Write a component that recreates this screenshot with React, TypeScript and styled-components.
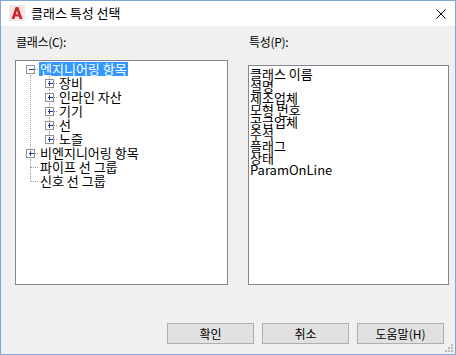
import styled, { createGlobalStyle } from 'styled-components';

const GlobalStyle = createGlobalStyle`
  html, body {
    margin: 0;
    padding: 0;
    background: #ffffff;
  }
  body {
    font-family: "Noto Sans CJK KR", "Liberation Sans", sans-serif;
    font-size: 12px;
    color: #000000;
  }
`;

const Window = styled.div`
  position: relative;
  box-sizing: border-box;
  width: 456px;
  height: 355px;
  border: 1px solid #7ea6d9;
  background: #f0f0f0;
  display: flex;
  flex-direction: column;
`;

const TitleBar = styled.div`
  height: 25px;
  background: #ffffff;
  display: flex;
  align-items: center;
  padding: 0 9px 0 8px;
  gap: 6px;
`;

const TitleText = styled.div`
  flex: 1;
  font-size: 13px;
  line-height: 16px;
  margin-top: -1px;
`;

const Body = styled.div`
  display: grid;
  grid-template-columns: 213px 201px;
  column-gap: 20px;
  padding: 9px 6px 0 14px;
`;

const Column = styled.div`
  display: flex;
  flex-direction: column;
`;

const Label = styled.div`
  line-height: 14px;
  height: 14px;
  margin-bottom: 11px;
  padding-left: 1px;
  letter-spacing: -0.3px;
`;

const ListBox = styled.div<{ $height: number; $offset?: number }>`
  box-sizing: border-box;
  height: ${(p) => p.$height}px;
  margin-top: ${(p) => p.$offset || 0}px;
  background: #ffffff;
  border: 1px solid #82878f;
  overflow: hidden;
`;

const TreeList = styled.div`
  padding-top: 1px;
  display: flex;
  flex-direction: column;
`;

const TreeRow = styled.div`
  display: flex;
  align-items: center;
  height: 14px;
`;

const TreeLabel = styled.span<{ $selected?: boolean }>`
  font-size: 13px;
  line-height: 14px;
  height: 14px;
  padding: 0 1px;
  white-space: nowrap;
  background: ${(p) => (p.$selected ? '#3399ff' : 'transparent')};
  color: ${(p) => (p.$selected ? '#ffffff' : '#000000')};
`;

const PropList = styled.div`
  padding: 2px 0 0 1px;
  display: flex;
  flex-direction: column;
`;

const PropItem = styled.div`
  font-size: 13px;
  line-height: 12px;
  height: 12px;
  white-space: nowrap;
`;

const Footer = styled.div`
  display: flex;
  justify-content: flex-end;
  gap: 8px;
  margin-top: 38px;
  padding-right: 11px;
`;

const Button = styled.button`
  box-sizing: border-box;
  width: 87px;
  height: 21px;
  padding: 0;
  background: #e1e1e1;
  border: 1px solid #adadad;
  font-family: inherit;
  font-size: 12px;
  color: #000000;
`;

const Grip = styled.svg`
  position: absolute;
  right: 1px;
  bottom: 1px;
`;

type Node = {
  label: string;
  level: number;
  toggle?: '+' | '-';
  selected?: boolean;
  first?: boolean;
  last?: boolean;
  guides: boolean[];
};

const tree: Node[] = [
  { label: '엔지니어링 항목', level: 0, toggle: '-', selected: true, first: true, guides: [] },
  { label: '장비', level: 1, toggle: '+', guides: [true] },
  { label: '인라인 자산', level: 1, toggle: '+', guides: [true] },
  { label: '기기', level: 1, toggle: '+', guides: [true] },
  { label: '선', level: 1, toggle: '+', guides: [true] },
  { label: '노즐', level: 1, toggle: '+', last: true, guides: [true] },
  { label: '비엔지니어링 항목', level: 0, toggle: '+', guides: [] },
  { label: '파이프 선 그룹', level: 0, guides: [] },
  { label: '신호 선 그룹', level: 0, last: true, guides: [] },
];

const properties = [
  '클래스 이름',
  '설명',
  '제조업체',
  '모형 번호',
  '공급업체',
  '주석',
  '플래그',
  '상태',
  'ParamOnLine',
];

const cx = (level: number) => 14 + 19 * level;

const Connector = ({ node }: { node: Node }) => {
  const c = cx(node.level);
  const width = c + 9;
  const x = c + 0.5;
  const line = { stroke: '#a0a0a0', strokeDasharray: '1 1', shapeRendering: 'crispEdges' as const };
  return (
    <svg width={width} height={14} style={{ flex: 'none' }}>
      {node.guides.map((g, a) =>
        g ? <line key={a} x1={cx(a) + 0.5} y1={0} x2={cx(a) + 0.5} y2={14} {...line} /> : null
      )}
      {!(node.level === 0 && node.first) && <line x1={x} y1={0} x2={x} y2={7} {...line} />}
      {!node.last && <line x1={x} y1={7} x2={x} y2={14} {...line} />}
      <line x1={node.toggle ? c + 5 : c + 1} y1={7.5} x2={width} y2={7.5} {...line} />
      {node.toggle && (
        <g shapeRendering="crispEdges">
          <rect x={c - 3.5} y={3.5} width={8} height={8} fill="#ffffff" stroke="#919191" />
          <line x1={c - 1} y1={7.5} x2={c + 4} y2={7.5} stroke="#1f3f8f" />
          {node.toggle === '+' && <line x1={x} y1={5} x2={x} y2={10} stroke="#1f3f8f" />}
        </g>
      )}
    </svg>
  );
};

const AppIcon = () => (
  <svg width={16} height={16} viewBox="0 0 16 16" style={{ flex: 'none', marginTop: -2 }}>
    <rect x={0} y={0} width={16} height={16} fill="#f4e4e4" />
    <path
      d="M2.5 14 L6.6 2 L9.4 2 L13.5 14 L10.6 14 L9.8 11.4 L6.2 11.4 L5.4 14 Z M6.9 9.2 L9.1 9.2 L8 5.6 Z"
      fill="#c9252c"
      fillRule="evenodd"
    />
  </svg>
);

const CloseIcon = () => (
  <svg width={10} height={10} viewBox="0 0 10 10" style={{ flex: 'none', marginTop: 1 }}>
    <path d="M0.5 0.5 L9.5 9.5 M9.5 0.5 L0.5 9.5" stroke="#000000" strokeWidth={1} />
  </svg>
);

export default function App() {
  return (
    <>
      <GlobalStyle />
      <Window>
        <TitleBar>
          <AppIcon />
          <TitleText>클래스 특성 선택</TitleText>
          <CloseIcon />
        </TitleBar>
        <Body>
          <Column>
            <Label>클래스(C):</Label>
            <ListBox $height={225}>
              <TreeList>
                {tree.map((node) => (
                  <TreeRow key={node.label}>
                    <Connector node={node} />
                    <TreeLabel $selected={node.selected}>{node.label}</TreeLabel>
                  </TreeRow>
                ))}
              </TreeList>
            </ListBox>
          </Column>
          <Column>
            <Label>특성(P):</Label>
            <ListBox $height={220} $offset={5}>
              <PropList>
                {properties.map((p) => (
                  <PropItem key={p}>{p}</PropItem>
                ))}
              </PropList>
            </ListBox>
          </Column>
        </Body>
        <Footer>
          <Button>확인</Button>
          <Button>취소</Button>
          <Button>도움말(H)</Button>
        </Footer>
        <Grip width={10} height={10} viewBox="0 0 10 10">
          {[
            [7, 1],
            [7, 4],
            [4, 4],
            [7, 7],
            [4, 7],
            [1, 7],
          ].map(([x, y]) => (
            <rect key={`${x}-${y}`} x={x} y={y} width={2} height={2} fill="#b8b8b8" />
          ))}
        </Grip>
      </Window>
    </>
  );
}
